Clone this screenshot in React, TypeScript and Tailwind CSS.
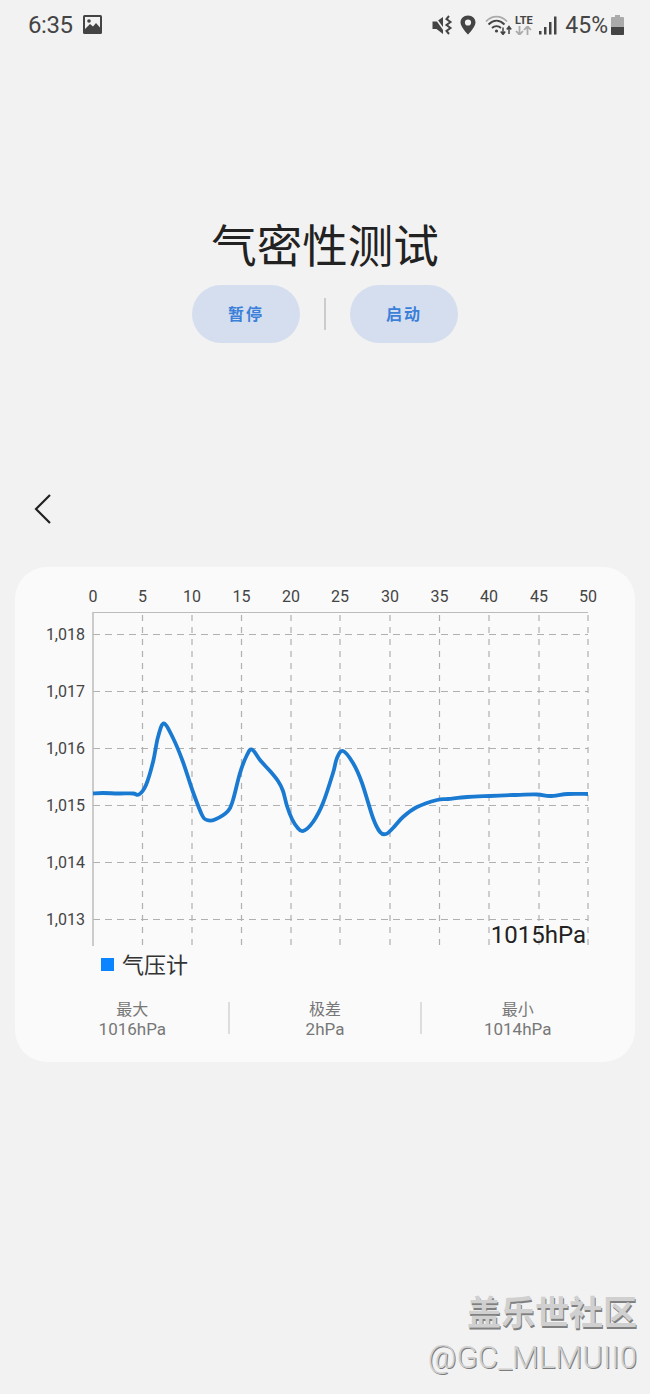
const cjk = "font-['Noto_Sans_CJK_SC',sans-serif]";

const xTicks = [
  { label: "0", x: 93 },
  { label: "5", x: 142.5 },
  { label: "10", x: 192 },
  { label: "15", x: 241.5 },
  { label: "20", x: 291 },
  { label: "25", x: 340 },
  { label: "30", x: 390 },
  { label: "35", x: 439.5 },
  { label: "40", x: 489 },
  { label: "45", x: 539 },
  { label: "50", x: 588 },
];

const yTicks = [
  { label: "1,018", y: 634.5 },
  { label: "1,017", y: 691.5 },
  { label: "1,016", y: 748.5 },
  { label: "1,015", y: 805.5 },
  { label: "1,014", y: 862.5 },
  { label: "1,013", y: 919.5 },
];

// traced from the reference, page coordinates
const pressure: [number, number][] = [
  [93, 793.5], [103, 793], [118, 793.5], [133, 793.5], [139, 794.5], [146, 785], [153, 762], [158, 737],
  [164, 723.5], [173, 738], [183, 762], [193, 792], [202, 815], [207, 820], [215, 819.5], [228, 811],
  [233, 800], [240, 773], [247, 755], [252, 749.5], [260, 760], [270, 771], [278, 781], [283, 791],
  [287, 806], [292, 819], [297, 827], [303, 831], [313, 822], [323, 803], [333, 773], [337, 758],
  [343, 751], [353, 763], [362, 783], [373, 818], [380, 832], [386, 834], [393, 828], [403, 817],
  [417, 807], [437, 800], [448, 799], [467, 797], [490, 796], [513, 795], [537, 794.5], [550, 796],
  [568, 794], [588, 794],
];

function smoothPath(pts: [number, number][]) {
  let d = `M${pts[0][0]} ${pts[0][1]}`;
  for (let i = 0; i < pts.length - 1; i++) {
    const p0 = pts[Math.max(i - 1, 0)];
    const p1 = pts[i];
    const p2 = pts[i + 1];
    const p3 = pts[Math.min(i + 2, pts.length - 1)];
    const c1x = p1[0] + (p2[0] - p0[0]) / 6;
    const c1y = p1[1] + (p2[1] - p0[1]) / 6;
    const c2x = p2[0] - (p3[0] - p1[0]) / 6;
    const c2y = p2[1] - (p3[1] - p1[1]) / 6;
    d += ` C${c1x.toFixed(1)} ${c1y.toFixed(1)} ${c2x.toFixed(1)} ${c2y.toFixed(1)} ${p2[0]} ${p2[1]}`;
  }
  return d;
}

function StatusBar() {
  return (
    <div className="flex h-[50px] items-center justify-between pl-[28px] pr-[26px] text-[#444] font-['Roboto',sans-serif]">
      <div className="flex items-center gap-[10px]">
        <span className="text-[24px] leading-none tracking-[-0.4px]">6:35</span>
        <svg width="19" height="19" viewBox="0 0 19 19" className="mb-[2px]">
          <rect x="0" y="0" width="19" height="19" rx="1.5" fill="#444" />
          <rect x="2" y="2" width="15" height="12" fill="#f2f2f2" />
          <circle cx="6" cy="6" r="1.8" fill="#444" />
          <path d="M2 14 L7 9 L10 11.5 L13 8 L17 12.5 V17 H2 Z" fill="#444" />
        </svg>
      </div>
      <div className="flex items-center">
        {/* mute + vibrate */}
        <svg width="21" height="20" viewBox="0 0 21 20" className="mr-[7px]">
          <path d="M0.5 6.5 H4.5 L11 2 V19 L4.5 14 H0.5 Z" fill="#444" />
          <path d="M2 1 L13.5 17" stroke="#f2f2f2" strokeWidth="1.6" />
          <path
            d="M17 1 L14.5 4 L18.5 7 L14.5 10 L18.5 13 L14.5 16 L17 19"
            fill="none"
            stroke="#444"
            strokeWidth="2"
          />
        </svg>
        <svg width="16" height="20" viewBox="0 0 16 20" className="mr-[9px]">
          <path
            fillRule="evenodd"
            d="M8 0.5 C3.6 0.5 0.5 3.6 0.5 7.5 C0.5 12 8 19.5 8 19.5 C8 19.5 15.5 12 15.5 7.5 C15.5 3.6 12.4 0.5 8 0.5 Z M8 4.4 A3.1 3.1 0 1 1 8 10.6 A3.1 3.1 0 1 1 8 4.4 Z"
            fill="#444"
          />
        </svg>
        {/* wifi with arrows */}
        <svg width="27" height="20" viewBox="0 0 27 20" className="mr-[2px]">
          <path d="M1 6.5 C7 0 16 0 22 6.5" fill="none" stroke="#aaa" strokeWidth="1.8" />
          <path d="M3.5 9.5 C8.5 4.5 14.5 4.5 19.5 9.5" fill="none" stroke="#444" strokeWidth="1.8" />
          <path d="M7 13 C9.5 10.5 13.5 10.5 16 13" fill="none" stroke="#444" strokeWidth="1.8" />
          <circle cx="11.5" cy="16" r="1.6" fill="#444" />
          <path d="M18 12.5 V19 M15.8 16.5 L18 19.5 L20.2 16.5" fill="none" stroke="#444" strokeWidth="1.5" />
          <path d="M24 19 V12 M21.8 14.5 L24 11.5 L26.2 14.5" fill="none" stroke="#444" strokeWidth="1.5" />
        </svg>
        <div className="mr-[6px] flex w-[19px] flex-col items-center">
          <span className="text-[11px] font-bold leading-[11px]">LTE</span>
          <svg width="17" height="9" viewBox="0 0 17 9">
            <path d="M4.5 0 V8 M1 5 L4.5 8.7 L8 5" fill="none" stroke="#aaa" strokeWidth="1.8" />
            <path d="M12.5 9 V1 M9 4 L12.5 0.3 L16 4" fill="none" stroke="#aaa" strokeWidth="1.8" />
          </svg>
        </div>
        <svg width="18" height="19" viewBox="0 0 18 19" className="mr-[8px]">
          <rect x="0" y="15" width="2.5" height="3.5" fill="#444" />
          <rect x="5" y="11" width="2.5" height="7.5" fill="#444" />
          <rect x="10" y="6" width="2.5" height="12.5" fill="#444" />
          <rect x="15" y="0.5" width="2.5" height="18" fill="#444" />
        </svg>
        <span className="text-[23px] leading-none">45%</span>
        <svg width="13" height="20" viewBox="0 0 13 20" className="ml-[3px]">
          <rect x="4" y="0" width="5" height="2.5" fill="#aaa" />
          <rect x="0" y="2" width="13" height="18" rx="1" fill="#aaa" />
          <path d="M0 12 H13 V19 A1 1 0 0 1 12 20 H1 A1 1 0 0 1 0 19 Z" fill="#444" />
        </svg>
      </div>
    </div>
  );
}

function PressureChart() {
  return (
    <svg width="620" height="381" viewBox="15 567 620 381" className="block font-['Roboto',sans-serif]">
      {yTicks.map((t) => (
        <line key={t.label} x1="93" x2="588" y1={t.y} y2={t.y} stroke="#b0b0b0" strokeWidth="1.2" strokeDasharray="7 5" />
      ))}
      {xTicks.slice(1).map((t) => (
        <line key={t.label} x1={t.x} x2={t.x} y1="615" y2="946" stroke="#b0b0b0" strokeWidth="1.2" strokeDasharray="6 6" />
      ))}
      <line x1="93" x2="588" y1="612.5" y2="612.5" stroke="#bbb" strokeWidth="1.2" />
      <line x1="93" x2="93" y1="612" y2="946" stroke="#bbb" strokeWidth="1.5" />
      {xTicks.map((t) => (
        <text key={t.label} x={t.x} y="602" textAnchor="middle" fontSize="16" fill="#444">
          {t.label}
        </text>
      ))}
      {yTicks.map((t) => (
        <text key={t.label} x="85" y={t.y + 5.5} textAnchor="end" fontSize="16" fill="#444">
          {t.label}
        </text>
      ))}
      <path d={smoothPath(pressure)} fill="none" stroke="#1a7ad1" strokeWidth="3.8" strokeLinejoin="round" />
      <text x="586" y="943" textAnchor="end" fontSize="24" fill="#222">
        1015hPa
      </text>
    </svg>
  );
}

function Stat({ label, value }: { label: string; value: string }) {
  return (
    <div className="flex-1 text-center text-[#777]">
      <div className={`${cjk} text-[16px] leading-[20px]`}>{label}</div>
      <div className="font-['Roboto',sans-serif] text-[17px] leading-[22px]">{value}</div>
    </div>
  );
}

export default function App() {
  return (
    <div className="flex h-[1394px] w-[650px] flex-col overflow-hidden bg-[#f2f2f2]">
      <StatusBar />

      <h1 className={`${cjk} mt-[163px] text-center text-[45.5px] font-normal leading-[60px] text-[#222]`}>气密性测试</h1>

      <div className="mt-[12px] flex items-center justify-center">
        <button className={`${cjk} h-[58px] w-[108px] rounded-full bg-[#d5deef] pb-[3px] text-[16px] font-bold tracking-[2px] text-[#3a7fd8]`}>
          暂停
        </button>
        <div className="mx-[24px] h-[32px] w-[2px] bg-[#cccccc]" />
        <button className={`${cjk} h-[58px] w-[108px] rounded-full bg-[#d5deef] pb-[3px] text-[16px] font-bold tracking-[2px] text-[#3a7fd8]`}>
          启动
        </button>
      </div>

      <div className="mt-[151px] pl-[34px]">
        <svg width="18" height="30" viewBox="0 0 18 30" className="block">
          <path d="M16 1 L2 15 L16 29" fill="none" stroke="#222" strokeWidth="2.2" />
        </svg>
      </div>

      <div className="mx-[15px] mt-[43px] h-[495px] rounded-[32px] bg-[#fafafa]">
        <PressureChart />
        <div className="flex items-center pl-[86px]">
          <div className="h-[13px] w-[13px] bg-[#0a84ff]" />
          <span className={`${cjk} ml-[8px] pb-[3px] text-[22px] leading-[30px] text-[#333]`}>气压计</span>
        </div>
        <div className="mt-[17px] flex items-start px-[22px]">
          <Stat label="最大" value="1016hPa" />
          <div className="mt-[4px] h-[32px] w-[2px] bg-[#dddddd]" />
          <Stat label="极差" value="2hPa" />
          <div className="mt-[4px] h-[32px] w-[2px] bg-[#dddddd]" />
          <Stat label="最小" value="1014hPa" />
        </div>
      </div>

      <div className="mt-[226px] pr-[13px] text-right text-[#d0d0d0]">
        <div className={`${cjk} text-[34px] font-bold leading-[45px] [text-shadow:1px_2px_0_#808080]`}>盖乐世社区</div>
        <div className="mt-[2px] font-['Roboto',sans-serif] text-[31.3px] font-light leading-[45px] [text-shadow:1px_1px_0_#7d7d7d]">
          @GC_MLMUII0
        </div>
      </div>
    </div>
  );
}
